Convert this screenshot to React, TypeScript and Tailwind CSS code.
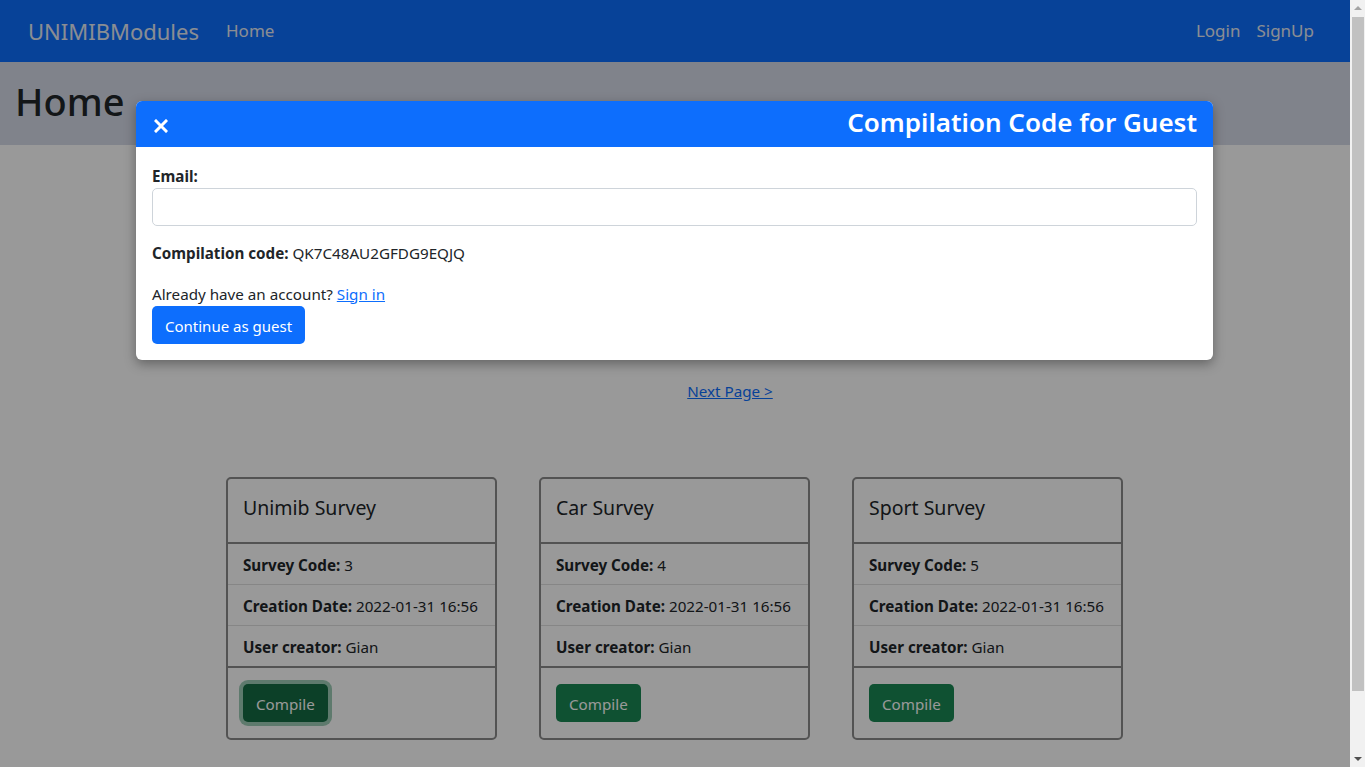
import React from "react";

const font = { fontFamily: '"Noto Sans", "Open Sans", sans-serif' };

function Card({ title, code }: { title: string; code: string }) {
  return (
    <div className="w-[271px] rounded-[5px] border-2 border-[#8a8a8a] bg-white">
      <div className="flex h-[65px] items-center border-b-2 border-[#8a8a8a] px-[15px] pb-[5px]">
        <span className="text-[19.5px] text-[#212529]">{title}</span>
      </div>
      <div className="whitespace-nowrap text-[15.2px] text-[#212529]">
        <div className="flex h-[41px] items-center border-b border-[#dfdfdf] px-[15px] pt-[2px]">
          <b className="font-bold">Survey Code:</b>&nbsp;{code}
        </div>
        <div className="flex h-[41px] items-center border-b border-[#dfdfdf] px-[15px] pt-[2px]">
          <b className="font-bold">Creation Date:</b>&nbsp;2022-01-31 16:56
        </div>
        <div className="flex h-[40px] items-center px-[15px] pt-[2px]">
          <b className="font-bold">User creator:</b>&nbsp;Gian
        </div>
      </div>
      <div className="border-t-2 border-[#8a8a8a] px-[15px] pt-[16px] pb-[16px]">
        {code === "3" ? (
          <button className="h-[38px] rounded-[5px] bg-[#146c43] px-[13px] pt-[2px] text-[15.2px] text-white shadow-[0_0_0_4px_rgba(60,153,110,0.5)]">
            Compile
          </button>
        ) : (
          <button className="h-[38px] rounded-[5px] bg-[#198754] px-[13px] pt-[2px] text-[15.2px] text-white">
            Compile
          </button>
        )}
      </div>
    </div>
  );
}

export default function App() {
  return (
    <div className="flex h-[767px] w-[1365px] overflow-hidden bg-white" style={font}>
      <div className="relative h-full flex-1 overflow-hidden">
        <nav className="flex h-[62px] items-center bg-[#0d6efd] pl-[28px] pr-[36px]">
          <span className="text-[22px] text-[#e6ecf5]">UNIMIBModules</span>
          <span className="ml-[27px] text-[17px] text-[#e6ecf5]">Home</span>
          <div className="ml-auto flex gap-[16px] text-[17px] text-[#e6ecf5]">
            <span>Login</span>
            <span>SignUp</span>
          </div>
        </nav>
        <header className="flex h-[83px] items-center bg-[#d5dbe8] px-[15px] pb-[4px]">
          <h1 className="text-[38px] font-medium text-[#212529]">Home</h1>
        </header>
        <div className="flex h-[248px] items-end justify-center pl-[110px]">
          <a className="mb-[-10px] text-[15.2px] text-[#0d6efd] underline">Next Page &gt;</a>
        </div>
        <div className="mt-[84px] flex justify-center gap-[42px] pr-[1px]">
          <Card title="Unimib Survey" code="3" />
          <Card title="Car Survey" code="4" />
          <Card title="Sport Survey" code="5" />
        </div>

        <div className="absolute inset-0 bg-black/40" />

        <div className="absolute left-[136px] top-[101px] w-[1077px] overflow-hidden rounded-[6px] bg-white shadow-[0_4px_12px_rgba(0,0,0,0.35)]">
          <div className="flex h-[46px] items-center justify-between bg-[#0d6efd] pl-[18px] pr-[16px] pb-[4px]">
            <svg width="14" height="14" viewBox="0 0 14 14" className="mt-[7px]">
              <path d="M2 2 L12 12 M12 2 L2 12" stroke="white" strokeWidth="3" strokeLinecap="square" />
            </svg>
            <span className="text-[26px] font-semibold text-white">Compilation Code for Guest</span>
          </div>
          <div className="px-[16px] pt-[18px] pb-[16px] text-[15.2px] text-[#212529]">
            <div className="font-bold">Email:</div>
            <div className="h-[38px] rounded-[5px] border border-[#ced4da]" />
            <div className="mt-[16px]">
              <b className="font-bold">Compilation code:</b> QK7C48AU2GFDG9EQJQ
            </div>
            <div className="mt-[18px]">
              Already have an account? <a className="text-[#0d6efd] underline">Sign in</a>
            </div>
            <button className="mt-[1px] h-[38px] rounded-[5px] bg-[#0d6efd] px-[13px] pt-[1px] text-[15px] text-white">
              Continue as guest
            </button>
          </div>
        </div>
      </div>
      <div className="relative h-full w-[15px] bg-[#f1f1f1]">
        <div className="absolute left-[4px] top-[6px] h-0 w-0 border-x-[4px] border-b-[4px] border-x-transparent border-b-[#a3a3a3]" />
        <div className="absolute left-[2px] right-[1px] top-[17px] h-[674px] bg-[#c1c1c1]" />
        <div className="absolute bottom-[6px] left-[4px] h-0 w-0 border-x-[4px] border-t-[4px] border-x-transparent border-t-[#505050]" />
      </div>
    </div>
  );
}
